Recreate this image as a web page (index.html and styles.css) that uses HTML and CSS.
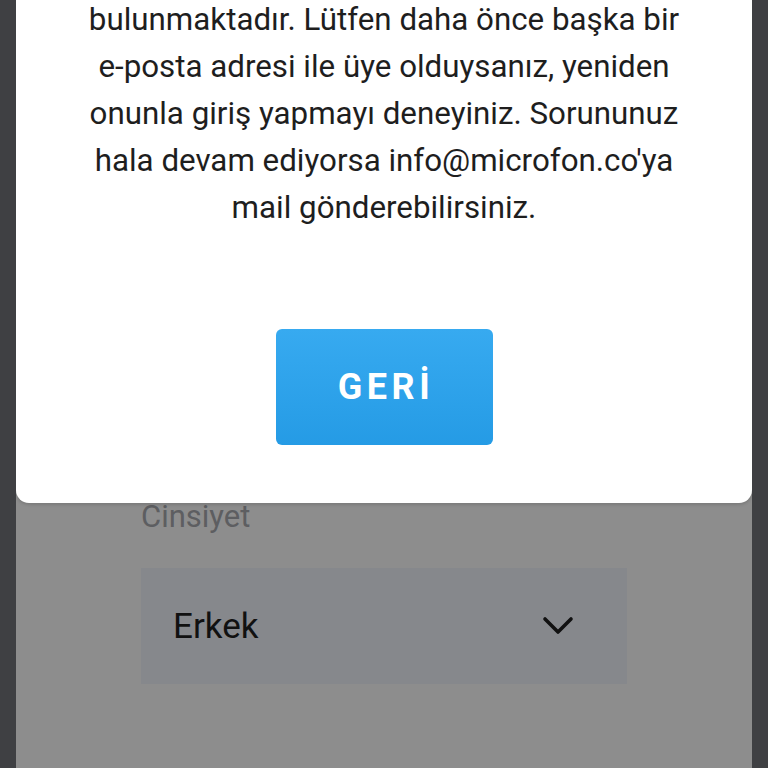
FILE: index.html
```html
<!DOCTYPE html>
<html lang="tr">
<head>
<meta charset="utf-8">
<link rel="stylesheet" href="styles.css">
</head>
<body>
<div class="screen">
  <div class="modal">
    <p class="message">bulunmaktadır. Lütfen daha önce başka bir<br>e-posta adresi ile üye olduysanız, yeniden<br>onunla giriş yapmayı deneyiniz. Sorununuz<br>hala devam ediyorsa info@microfon.co'ya<br>mail gönderebilirsiniz.</p>
    <button class="back-btn">GERİ</button>
  </div>
  <div class="form">
    <div class="label">Cinsiyet</div>
    <div class="select">
      <span class="select-value">Erkek</span>
      <svg class="chevron" width="32" height="20" viewBox="0 0 32 20"><path d="M3 3 L16 16 L29 3" fill="none" stroke="#111" stroke-width="3.6" stroke-linecap="round" stroke-linejoin="round"/></svg>
    </div>
  </div>
</div>
</body>
</html>
```
FILE: styles.css
```css
html, body {
  margin: 0;
  padding: 0;
  background: #3f4043;
  font-family: Roboto, "Noto Sans", sans-serif;
}
.screen {
  margin: 0 16px;
  height: 768px;
  background: #8d8d8d;
  display: flex;
  flex-direction: column;
  overflow: hidden;
}
.modal {
  background: #ffffff;
  border-radius: 0 0 13px 13px;
  height: 503px;
  box-sizing: border-box;
  display: flex;
  flex-direction: column;
  align-items: center;
  box-shadow: 0 2px 3px rgba(0,0,0,0.12);
  position: relative;
  z-index: 1;
}
.message {
  margin: -4px 0 0;
  font-size: 31.3px;
  line-height: 47px;
  color: #1e1e1e;
  text-align: center;
  white-space: nowrap;
}
.back-btn {
  margin-top: 98px;
  width: 217px;
  height: 116px;
  border: none;
  border-radius: 6px;
  background: linear-gradient(180deg, #37aaf0 0%, #259be5 100%);
  color: #ffffff;
  font-family: Roboto, sans-serif;
  font-weight: 700;
  font-size: 36px;
  letter-spacing: 4.5px;
  padding: 0 0 0 4px;
}
.form {
  padding: 0 125px 0 125px;
  display: flex;
  flex-direction: column;
}
.label {
  margin-top: -6px;
  font-size: 31px;
  line-height: 40px;
  color: #5d5e61;
}
.select {
  margin-top: 31px;
  height: 116px;
  background: #86888c;
  display: flex;
  align-items: center;
  justify-content: space-between;
  padding: 0 53px 0 32px;
}
.select-value {
  font-size: 35px;
  color: #111111;
}
.chevron {
  display: block;
}
```
